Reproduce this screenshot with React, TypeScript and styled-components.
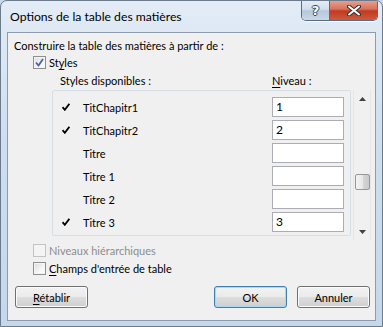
import React from 'react'
import styled, { createGlobalStyle, css } from 'styled-components'

const Global = createGlobalStyle`
  html, body {
    margin: 0;
    padding: 0;
    background: #c9d8ea;
  }
  body {
    font-family: Lato, 'Liberation Sans', sans-serif;
    font-size: 11px;
    color: #000;
  }
`

const Frame = styled.div`
  width: 383px;
  height: 327px;
  box-sizing: border-box;
  border: 1px solid #6b7b8c;
  border-radius: 7px 7px 0 0;
  background: linear-gradient(to bottom, #e3ecf6 0%, #cfdff0 40%, #c4d7ec 100%);
  display: flex;
  flex-direction: column;
  overflow: hidden;
`

const TitleBar = styled.div`
  height: 30px;
  display: flex;
  align-items: flex-start;
  padding: 0 4px 0 9px;
`

const Title = styled.div`
  padding-top: 8px;
  font-size: 12.2px;
  color: #000;
  flex: 1;
`

const CaptionButtons = styled.div`
  display: flex;
  margin-top: -1px;
  border: 1px solid #5b6b80;
  border-top: none;
  border-radius: 0 0 5px 5px;
  overflow: hidden;
  box-shadow: 0 1px 0 rgba(255, 255, 255, 0.7);
`

const CaptionButton = styled.div<{ $close?: boolean }>`
  height: 20px;
  display: flex;
  align-items: center;
  justify-content: center;
  ${(p) =>
    p.$close
      ? css`
          width: 47px;
          background: linear-gradient(to bottom, #e8a493 0%, #d8735d 45%, #c23a1f 55%, #cf5a3c 100%);
        `
      : css`
          width: 27px;
          border-right: 1px solid #5b6b80;
          background: linear-gradient(to bottom, #e6edf6 0%, #d2dfee 45%, #b6c8dc 55%, #c9d8e8 100%);
        `}
`

const HelpGlyph = styled.span`
  font-family: 'DejaVu Sans', sans-serif;
  font-weight: bold;
  font-size: 13px;
  color: #fff;
  text-shadow: 1px 0 0 #3b4656, -1px 0 0 #3b4656, 0 1px 0 #3b4656, 0 -1px 0 #3b4656;
`

const Client = styled.div`
  flex: 1;
  margin: 1px 6px 5px 6px;
  border: 1px solid #8c9bad;
  background: #f0f0f0;
  display: flex;
  flex-direction: column;
  padding: 5px 0 0 6px;
`

const Heading = styled.div`
  height: 15px;
  line-height: 15px;
`

const CheckRow = styled.div<{ $disabled?: boolean }>`
  display: flex;
  align-items: center;
  gap: 3px;
  height: 18px;
  padding-left: 19px;
  color: ${(p) => (p.$disabled ? '#8d8d8d' : '#000')};
`

const Box = styled.span<{ $disabled?: boolean }>`
  width: 11px;
  height: 11px;
  border: 1px solid ${(p) => (p.$disabled ? '#c4c4c4' : '#8e8f8f')};
  background: ${(p) =>
    p.$disabled
      ? '#f4f4f4'
      : 'linear-gradient(135deg, #dcdcdc 0%, #f6f6f6 60%, #ffffff 100%)'};
  box-shadow: inset 0 0 0 1px #f4f4f4;
  display: flex;
  align-items: center;
  justify-content: center;
`

const Key = styled.span`
  text-decoration: underline;
  text-underline-offset: 2px;
`

const Columns = styled.div`
  display: flex;
  height: 17px;
  align-items: center;
  margin-top: 1px;
`

const ColLabel = styled.span<{ $w: number; $indent?: number }>`
  box-sizing: border-box;
  width: ${(p) => p.$w}px;
  padding-left: ${(p) => p.$indent || 0}px;
`

const ListArea = styled.div`
  display: flex;
  gap: 2px;
  margin-left: 38px;
  margin-top: 1px;
`

const List = styled.div`
  width: 297px;
  height: 138px;
  border: 1px solid #d5dfe5;
  border-radius: 2px;
  padding-top: 6px;
  overflow: hidden;
`

const Row = styled.div`
  display: flex;
  align-items: center;
  height: 20px;
  margin-bottom: 3px;
`

const Mark = styled.span`
  width: 21px;
  padding-left: 9px;
  display: flex;
  align-items: center;
`

const RowLabel = styled.span`
  flex: 1;
`

const Level = styled.div`
  width: 67px;
  height: 18px;
  border: 1px solid #abadb3;
  background: #fff;
  margin-right: 6px;
  padding-left: 3px;
  line-height: 18px;
  font-size: 12px;
`

const ScrollBar = styled.div`
  width: 16px;
  height: 150px;
  border-left: 1px solid #e6e6e6;
  border-right: 1px solid #e6e6e6;
  background: #f0f0f0;
  display: flex;
  flex-direction: column;
  align-items: center;
`

const Arrow = styled.div`
  height: 17px;
  display: flex;
  align-items: center;
  justify-content: center;
`

const Track = styled.div`
  flex: 1;
  width: 100%;
  display: flex;
  flex-direction: column;
  align-items: center;
  padding-top: 67px;
`

const Thumb = styled.div`
  width: 13px;
  height: 14px;
  border: 1px solid #979797;
  border-radius: 2px;
  background: linear-gradient(to right, #f3f3f3 0%, #e8e8e8 50%, #d6d6d6 51%, #c9c9c9 100%);
`

const Buttons = styled.div`
  display: flex;
  align-items: center;
  gap: 10px;
  margin-top: 9px;
  padding-left: 1px;
  padding-right: 5px;
`

const Spacer = styled.div`
  flex: 1;
`

const Button = styled.div<{ $default?: boolean }>`
  width: 71px;
  height: 20px;
  border: 1px solid ${(p) => (p.$default ? '#3c7fb1' : '#707070')};
  border-radius: 3px;
  background: linear-gradient(to bottom, #f2f2f2 0%, #ebebeb 50%, #dddddd 51%, #cfcfcf 100%);
  box-shadow: inset 0 0 0 1px ${(p) => (p.$default ? '#a7d9f5' : '#fbfbfb')};
  display: flex;
  align-items: center;
  justify-content: center;
`

const Check = () => (
  <svg width="8" height="8" viewBox="0 0 8 8">
    <path d="M0.5 4.2 L2.8 6.8 L7.4 0.8" fill="none" stroke="#000" strokeWidth="1.8" />
  </svg>
)

const BoxCheck = () => (
  <svg width="9" height="9" viewBox="0 0 9 9">
    <path d="M1 4.5 L3.5 7.5 L8 1" fill="none" stroke="#4a64a8" strokeWidth="1.8" />
  </svg>
)

const rows = [
  { name: 'TitChapitr1', checked: true, level: '1' },
  { name: 'TitChapitr2', checked: true, level: '2' },
  { name: 'Titre', checked: false, level: '' },
  { name: 'Titre 1', checked: false, level: '' },
  { name: 'Titre 2', checked: false, level: '' },
  { name: 'Titre 3', checked: true, level: '3' },
]

export default function App() {
  return (
    <>
      <Global />
      <Frame>
        <TitleBar>
          <Title>Options de la table des matières</Title>
          <CaptionButtons>
            <CaptionButton>
              <HelpGlyph>?</HelpGlyph>
            </CaptionButton>
            <CaptionButton $close>
              <svg width="14" height="11" viewBox="0 0 14 11">
                <path d="M2 1.5 L12 9.5 M12 1.5 L2 9.5" stroke="#3b3030" strokeWidth="4" strokeLinecap="round" />
                <path d="M2 1.5 L12 9.5 M12 1.5 L2 9.5" stroke="#fff" strokeWidth="2" strokeLinecap="round" />
              </svg>
            </CaptionButton>
          </CaptionButtons>
        </TitleBar>
        <Client>
          <Heading>Construire la table des matières à partir de :</Heading>
          <CheckRow>
            <Box>
              <BoxCheck />
            </Box>
            <span>
              St<Key>y</Key>les
            </span>
          </CheckRow>
          <Columns>
            <ColLabel $w={258} $indent={46}>
              Styles disponibles :
            </ColLabel>
            <ColLabel $w={80}>
              <Key>N</Key>iveau :
            </ColLabel>
          </Columns>
          <ListArea>
            <List>
              {rows.map((r) => (
                <Row key={r.name}>
                  <Mark>{r.checked && <Check />}</Mark>
                  <RowLabel>{r.name}</RowLabel>
                  <Level>{r.level}</Level>
                </Row>
              ))}
            </List>
            <ScrollBar>
              <Arrow>
                <svg width="7" height="4" viewBox="0 0 7 4">
                  <path d="M0 4 L3.5 0 L7 4 Z" fill="#404040" />
                </svg>
              </Arrow>
              <Track>
                <Thumb />
              </Track>
              <Arrow>
                <svg width="7" height="4" viewBox="0 0 7 4">
                  <path d="M0 0 L3.5 4 L7 0 Z" fill="#404040" />
                </svg>
              </Arrow>
            </ScrollBar>
          </ListArea>
          <CheckRow $disabled style={{ marginTop: 1 }}>
            <Box $disabled />
            <span>Niveaux hiérarchiques</span>
          </CheckRow>
          <CheckRow>
            <Box />
            <span>
              <Key>C</Key>hamps d'entrée de table
            </span>
          </CheckRow>
          <Buttons>
            <Button>
              <span>
                <Key>R</Key>établir
              </span>
            </Button>
            <Spacer />
            <Button $default>OK</Button>
            <Button>Annuler</Button>
          </Buttons>
        </Client>
      </Frame>
    </>
  )
}
